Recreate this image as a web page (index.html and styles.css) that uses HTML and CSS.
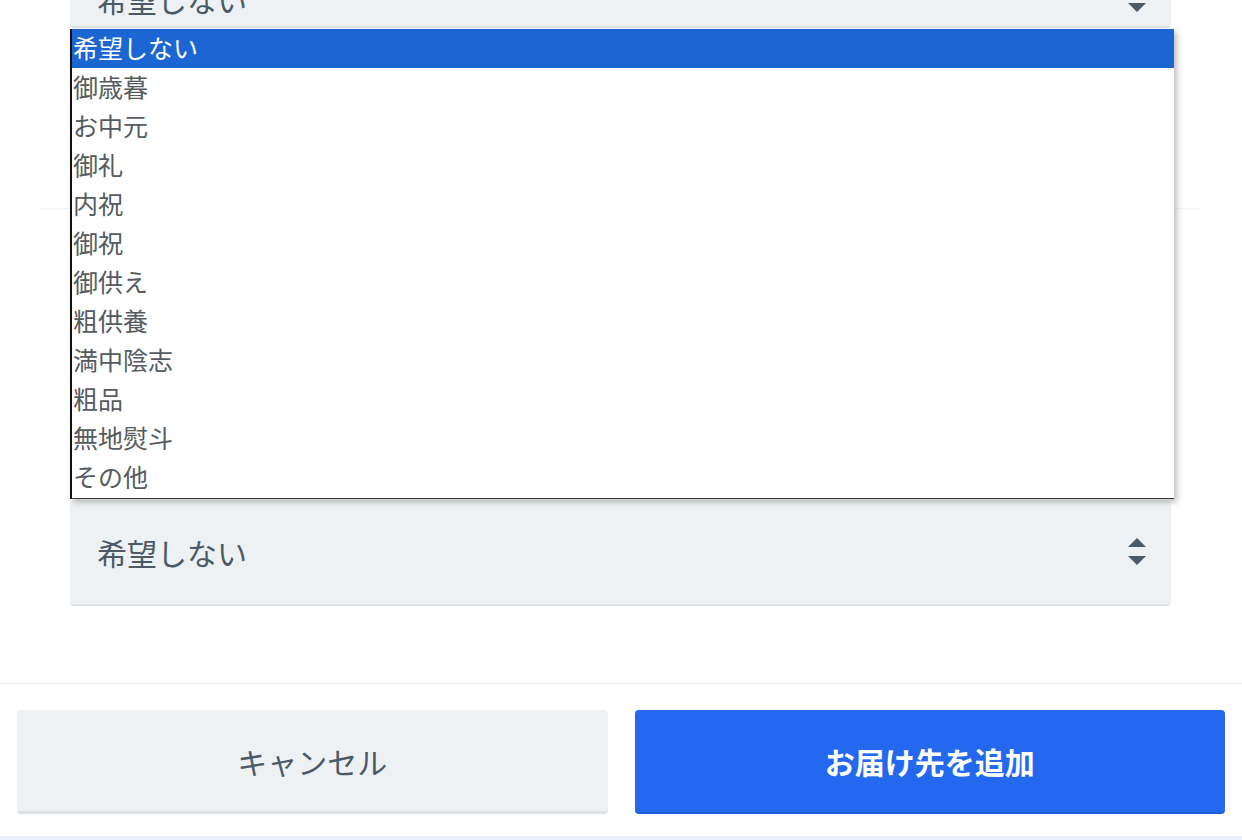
FILE: index.html
```html
<!DOCTYPE html>
<html lang="ja">
<head>
<meta charset="utf-8">
<title>お届け先を追加</title>
<link rel="stylesheet" href="styles.css">
</head>
<body>
<div class="page">
  <div class="form">
    <div class="select select-top">
      <span class="select-value">希望しない</span>
      <svg class="arrows" width="18" height="28" viewBox="0 0 18 28"><polygon points="9,0 18,9 0,9"/><polygon points="0,18 18,18 9,27"/></svg>
    </div>
    <div class="divider"></div>
    <div class="select select-bottom">
      <span class="select-value">希望しない</span>
      <svg class="arrows" width="18" height="28" viewBox="0 0 18 28"><polygon points="9,0 18,9 0,9"/><polygon points="0,18 18,18 9,27"/></svg>
    </div>
  </div>
  <div class="footer">
    <button class="btn btn-cancel">キャンセル</button>
    <button class="btn btn-primary">お届け先を追加</button>
  </div>
  <div class="bottom-line"></div>

  <ul class="listbox">
    <li class="opt selected">希望しない</li>
    <li class="opt">御歳暮</li>
    <li class="opt">お中元</li>
    <li class="opt">御礼</li>
    <li class="opt">内祝</li>
    <li class="opt">御祝</li>
    <li class="opt">御供え</li>
    <li class="opt">粗供養</li>
    <li class="opt">満中陰志</li>
    <li class="opt">粗品</li>
    <li class="opt">無地熨斗</li>
    <li class="opt">その他</li>
  </ul>
</div>
</body>
</html>
```
FILE: styles.css
```css
html, body {
  margin: 0;
  padding: 0;
  background: #ffffff;
  overflow: hidden;
}
body {
  font-family: "Noto Sans CJK JP", "Noto Sans", sans-serif;
  width: 1242px;
  height: 840px;
}
.page {
  position: relative;
  width: 1242px;
  height: 840px;
  overflow: hidden;
}
.form {
  padding: 0 71px 0 70px;
  display: flex;
  flex-direction: column;
}
.select {
  display: flex;
  align-items: center;
  justify-content: space-between;
  background: #eef1f3;
  border-bottom: 2px solid #dde2e5;
  border-radius: 4px;
  box-sizing: border-box;
  padding: 0 25px 0 27px;
  color: #4b5a66;
}
.select-value {
  font-size: 30px;
  line-height: 1;
}
.arrows {
  fill: #4b5a66;
  display: block;
}
.select-top {
  height: 56px;
  margin-top: -28px;
}
.select-bottom {
  height: 106px;
}
.divider {
  height: 1px;
  background: #f2f3f4;
  margin: 180px -29px 291px -30px;
}
.footer {
  margin-top: 77px;
  border-top: 1px solid #f0f1f2;
  padding: 26px 17px 22px;
  display: flex;
  gap: 27px;
}
.btn {
  flex: 1;
  height: 104px;
  border: none;
  border-radius: 4px;
  font-family: "Noto Sans CJK JP", "Noto Sans", sans-serif;
  font-size: 30px;
  box-sizing: border-box;
  cursor: pointer;
}
.btn-cancel {
  background: #eef1f3;
  color: #4b5a66;
  border-bottom: 3px solid #dde1e4;
}
.btn-primary {
  background: #2468ef;
  color: #ffffff;
  font-weight: 700;
  border-bottom: 2px solid #1f5ed8;
}
.bottom-line {
  height: 4px;
  background: #eaf0fa;
}
.listbox {
  position: absolute;
  top: 29px;
  left: 70px;
  width: 1104px;
  height: 470px;
  margin: 0;
  padding: 0;
  list-style: none;
  box-sizing: border-box;
  background: #ffffff;
  border-left: 2px solid #111111;
  border-bottom: 1px solid #3a3a3a;
  box-shadow: 3px 3px 6px rgba(0, 0, 0, 0.25);
}
.opt {
  height: 39px;
  line-height: 36px;
  padding-bottom: 3px;
  box-sizing: border-box;
  font-size: 25px;
  color: #555b60;
  padding-left: 1px;
  white-space: nowrap;
}
.opt.selected {
  background: #1b66d3;
  color: #ffffff;
}
```
